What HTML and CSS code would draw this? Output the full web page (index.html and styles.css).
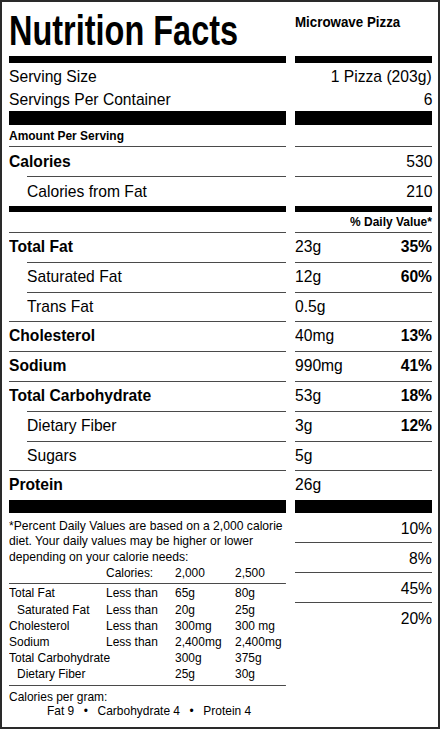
FILE: index.html
```html
<!DOCTYPE html>
<html lang="en">
<head>
<meta charset="utf-8">
<title>Nutrition Facts</title>
<link rel="stylesheet" href="styles.css">
</head>
<body>
<div class="label">
  <div class="row header">
    <div class="title-wrap"><span class="title">Nutrition Facts</span></div>
    <div class="product"><span class="t">Microwave Pizza</span></div>
  </div>
  <div class="row"><div class="bar bar-7"></div><div class="bar bar-7"></div></div>
  <div class="row serving">
    <div>
      <div><span class="t">Serving Size</span></div>
      <div><span class="t">Servings Per Container</span></div>
    </div>
    <div class="right">
      <div><span class="t r">1 Pizza (203g)</span></div>
      <div><span class="t r">6</span></div>
    </div>
  </div>
  <div class="row"><div class="bar bar-14"></div><div class="bar bar-14"></div></div>
  <div class="row amount">
    <div class="small-bold"><span class="t">Amount Per Serving</span></div>
    <div></div>
  </div>
  <div class="row cal">
    <div class="cell bold"><span class="t">Calories</span></div>
    <div class="cell right"><span class="t r">530</span></div>
  </div>
  <div class="row cal">
    <div class="cell sub"><span class="t">Calories from Fat</span></div>
    <div class="cell right"><span class="t r">210</span></div>
  </div>
  <div class="row"><div class="bar bar-6"></div><div class="bar bar-6"></div></div>
  <div class="row dv">
    <div></div>
    <div class="small-bold right"><span class="t r">% Daily Value*</span></div>
  </div>
  <div class="row nut">
    <div class="cell bold"><span class="t">Total Fat</span></div>
    <div class="cell split"><span class="t">23g</span><b class="t r">35%</b></div>
  </div>
  <div class="row nut">
    <div class="cell sub"><span class="t">Saturated Fat</span></div>
    <div class="cell split"><span class="t">12g</span><b class="t r">60%</b></div>
  </div>
  <div class="row nut">
    <div class="cell sub"><span class="t">Trans Fat</span></div>
    <div class="cell split"><span class="t">0.5g</span></div>
  </div>
  <div class="row nut">
    <div class="cell bold"><span class="t">Cholesterol</span></div>
    <div class="cell split"><span class="t">40mg</span><b class="t r">13%</b></div>
  </div>
  <div class="row nut">
    <div class="cell bold"><span class="t">Sodium</span></div>
    <div class="cell split"><span class="t">990mg</span><b class="t r">41%</b></div>
  </div>
  <div class="row nut">
    <div class="cell bold"><span class="t">Total Carbohydrate</span></div>
    <div class="cell split"><span class="t">53g</span><b class="t r">18%</b></div>
  </div>
  <div class="row nut">
    <div class="cell sub"><span class="t">Dietary Fiber</span></div>
    <div class="cell split"><span class="t">3g</span><b class="t r">12%</b></div>
  </div>
  <div class="row nut">
    <div class="cell sub"><span class="t">Sugars</span></div>
    <div class="cell split"><span class="t">5g</span></div>
  </div>
  <div class="row nut">
    <div class="cell bold"><span class="t">Protein</span></div>
    <div class="cell split"><span class="t">26g</span></div>
  </div>
  <div class="row"><div class="bar bar-13"></div><div class="bar bar-13"></div></div>
  <div class="row foot">
    <div class="foot-left">
      <div class="note">*Percent Daily Values are based on a 2,000 calorie diet. Your daily values may be higher or lower depending on your calorie needs:</div>
      <div class="dv-table head">
        <span></span><span>Calories:</span><span>2,000</span><span>2,500</span>
      </div>
      <div class="dv-table body">
        <span>Total Fat</span><span>Less than</span><span>65g</span><span>80g</span>
        <span class="ind">Saturated Fat</span><span>Less than</span><span>20g</span><span>25g</span>
        <span>Cholesterol</span><span>Less than</span><span>300mg</span><span>300 mg</span>
        <span>Sodium</span><span>Less than</span><span>2,400mg</span><span>2,400mg</span>
        <span class="span2">Total Carbohydrate</span><span>300g</span><span>375g</span>
        <span class="ind span2">Dietary Fiber</span><span>25g</span><span>30g</span>
      </div>
      <div class="per-gram">
        <div>Calories per gram:</div>
        <div class="per-gram-list"><span>Fat 9</span><span>•</span><span>Carbohydrate 4</span><span>•</span><span>Protein 4</span></div>
      </div>
    </div>
    <div class="foot-right">
      <div class="pct"><span class="t r">10%</span></div>
      <div class="pct"><span class="t r">8%</span></div>
      <div class="pct"><span class="t r">45%</span></div>
      <div class="pct"><span class="t r">20%</span></div>
    </div>
  </div>
</div>
</body>
</html>
```

FILE: styles.css
```css
html, body {
  margin: 0;
  padding: 0;
  background: #fff;
  overflow: hidden;
}

body {
  font-family: "Liberation Sans", Arial, Helvetica, sans-serif;
  color: #000;
}

.label {
  box-sizing: border-box;
  width: 440px;
  height: 729px;
  border: 2px solid #2a2a2a;
  padding: 0 6px 0 7px;
  overflow: hidden;
}

.row {
  display: grid;
  grid-template-columns: 277px 137px;
  column-gap: 9px;
}

/* condensed text: the printed label uses a narrow Helvetica */
.t {
  display: inline-block;
  white-space: nowrap;
  transform: scaleX(0.92);
  transform-origin: 0 50%;
}

.t.r {
  transform-origin: 100% 50%;
}

.right {
  text-align: right;
}

.bold {
  font-weight: bold;
}

/* header */
.header {
  height: 54px;
  align-items: start;
}

.title-wrap {
  padding-top: 3px;
  white-space: nowrap;
}

.title {
  display: inline-block;
  font-size: 43px;
  font-weight: bold;
  line-height: 50px;
  transform: scaleX(0.755);
  transform-origin: 0 50%;
}

.product {
  font-size: 14.5px;
  font-weight: bold;
  line-height: 16px;
  padding-top: 12px;
}

/* bars */
.bar {
  background: #000;
}

.bar-6 { height: 6px; }
.bar-7 { height: 7px; }
.bar-13 { height: 13px; }
.bar-14 { height: 14px; }

/* serving */
.serving {
  font-size: 17px;
  line-height: 23px;
  padding-top: 1.6px;
  height: 46.4px;
}

/* small bold rows */
.small-bold {
  font-size: 13px;
  font-weight: bold;
}

.amount {
  height: 21px;
  line-height: 21px;
}

.dv {
  height: 20px;
  line-height: 20px;
}

/* bordered rows */
.cell {
  border-top: 1px solid #4a4a4a;
}

.sub {
  margin-left: 18px;
}

.cal {
  font-size: 17px;
  line-height: 29px;
}

.nut {
  font-size: 17px;
  line-height: 28.8px;
}

.split {
  display: flex;
  justify-content: space-between;
}

/* footnote */
.foot {
  align-items: start;
}

/* laid out at natural width, condensed like the rest of the text */
.foot-left {
  width: 301.09px;
  font-size: 13px;
  line-height: 15.7px;
  transform: scaleX(0.92);
  transform-origin: 0 0;
}

.note {
  font-size: 13.2px;
  padding-top: 4.5px;
}

.dv-table {
  display: grid;
  grid-template-columns: 105.43px 75px 65.22px auto;
  white-space: nowrap;
}

.dv-table.head {
  padding-bottom: 3px;
  border-bottom: 1px solid #4a4a4a;
}

.dv-table.body {
  line-height: 16.2px;
  padding: 1px 0 2.8px;
  border-bottom: 1px solid #4a4a4a;
}

.ind {
  padding-left: 8.7px;
}

.span2 {
  grid-column: span 2;
}

.per-gram {
  padding-top: 4px;
  line-height: 14px;
}

.per-gram-list {
  display: flex;
  gap: 10.4px;
  padding-left: 41.3px;
  white-space: nowrap;
}

.foot-right {
  display: flex;
  flex-direction: column;
}

.pct {
  font-size: 17px;
  line-height: 27px;
  height: 29px;
  padding-top: 2px;
  box-sizing: border-box;
  text-align: right;
}

.pct + .pct {
  height: 30px;
  border-top: 1px solid #4a4a4a;
}
```
